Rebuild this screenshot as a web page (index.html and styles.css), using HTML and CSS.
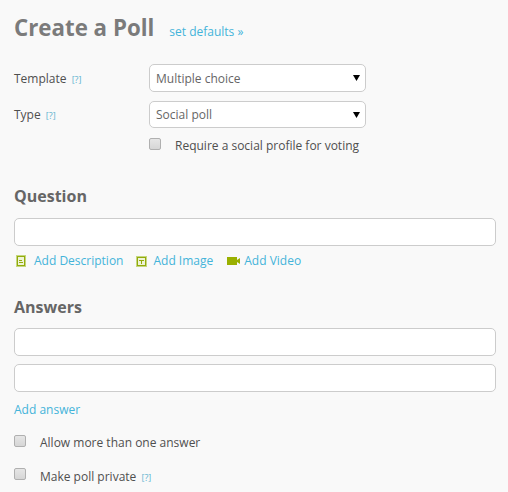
FILE: index.html
```html
<!DOCTYPE html>
<html lang="en">
<head>
    <meta charset="UTF-8">
    <title>Create a Poll</title>
    <link rel="stylesheet" href="styles.css">
</head>
<body>

<div class="title-row">
    <h1>Create a Poll</h1>
    <a class="link defaults" href="#">set defaults »</a>
</div>

<div class="form-row first">
    <div class="row-label">Template <a class="help" href="#">[?]</a></div>
    <select class="picker"><option>Multiple choice</option></select>
</div>
<div class="form-row second">
    <div class="row-label">Type <a class="help" href="#">[?]</a></div>
    <select class="picker short"><option>Social poll</option></select>
</div>
<div class="check-row social">
    <span class="check"></span>
    <span>Require a social profile for voting</span>
</div>

<h2 class="question-head">Question</h2>
<input class="text-box" type="text">
<div class="add-links">
    <a class="link add-item desc" href="#">
        <svg width="10" height="12" viewBox="0 0 10 12">
            <rect width="10" height="12" fill="#c5d77f"/>
            <rect x="1" y="1" width="8" height="10" fill="#eef3d6"/>
            <rect x="1.5" y="1.5" width="7" height="9" fill="none" stroke="#93ab0c"/>
            <rect x="3" y="5" width="3" height="1" fill="#93ab0c"/>
            <rect x="3" y="7" width="4" height="1" fill="#93ab0c"/>
        </svg>
        Add Description
    </a>
    <a class="link add-item image" href="#">
        <svg width="11" height="11" viewBox="0 0 11 11">
            <rect width="11" height="11" fill="#c5d77f"/>
            <rect x="1" y="1" width="9" height="9" fill="#eef3d6"/>
            <rect x="1.5" y="1.5" width="8" height="8" fill="none" stroke="#93ab0c"/>
            <rect x="3" y="4" width="5" height="1" fill="#93ab0c"/>
            <rect x="5" y="4" width="1" height="4" fill="#93ab0c"/>
        </svg>
        Add Image
    </a>
    <a class="link add-item video" href="#">
        <svg width="13" height="8" viewBox="0 0 13 8">
            <rect width="10" height="8" fill="#9ab000"/>
            <path d="M10 3 L13 1 V7 L10 5 Z" fill="#9ab000"/>
        </svg>
        Add Video
    </a>
</div>

<h2 class="answers-head">Answers</h2>
<input class="text-box" type="text">
<input class="text-box next" type="text">
<a class="link add-answer" href="#">Add answer</a>

<div class="check-row allow">
    <span class="check"></span>
    <span>Allow more than one answer</span>
</div>
<div class="check-row private">
    <span class="check"></span>
    <span class="private-text">Make poll private <a class="help" href="#">[?]</a></span>
</div>

</body>
</html>
```

FILE: styles.css
```css
html, body {
    height: 100%;
}
body {
    margin: 0;
    padding: 0 12px 0 14px;
    overflow: hidden;
    background-color: #f9f9f9;
    color: #4f4f4f;
    font-family: "Open Sans", sans-serif;
    font-size: 12px;
}
.link {
    color: #44b4d9;
    text-decoration: none;
}
.help {
    margin-left: 2px;
    color: #5fb3cf;
    font-size: 9px;
    text-decoration: none;
}
.title-row {
    display: flex;
    align-items: baseline;
    padding-top: 12px;
    height: 40px;
}
h1 {
    margin: 0;
    color: #7b7b7b;
    font-size: 22.3px;
    font-weight: 700;
    line-height: 32px;
}
.defaults {
    margin-left: 15px;
}
.form-row {
    display: flex;
    align-items: center;
    height: 28px;
}
.form-row.first {
    margin-top: 12px;
}
.form-row.second {
    height: 27px;
    margin-top: 9px;
}
.row-label {
    width: 135px;
}
.picker {
    appearance: none;
    width: 217px;
    height: 28px;
    padding: 0 6px;
    border: 1px solid #ccc;
    border-radius: 5px;
    background: #fff url("data:image/svg+xml,%3Csvg xmlns='http://www.w3.org/2000/svg' width='7' height='6'%3E%3Cpath d='M0 0H7L3.5 6Z' fill='%23000'/%3E%3C/svg%3E") no-repeat 203px 10px;
    color: #666;
    font-family: inherit;
    font-size: 12px;
}
.picker.short {
    height: 27px;
}
.check-row {
    display: flex;
    align-items: center;
    height: 14px;
}
.check {
    flex: none;
    box-sizing: border-box;
    width: 12px;
    height: 12px;
    margin-top: -2px;
    margin-right: 14px;
    border: 1px solid #b0b0b0;
    border-radius: 2px;
    background: linear-gradient(#e6e6e6, #d6d6d6);
}
.social {
    margin: 10px 0 0 135px;
}
.private-text {
    padding-top: 2px;
}
h2 {
    margin: 0;
    color: #666;
    font-size: 16px;
    font-weight: 700;
    line-height: 22px;
}
.question-head {
    margin-top: 33px;
}
.answers-head {
    margin-top: 26px;
}
.text-box {
    display: block;
    box-sizing: border-box;
    width: 482px;
    height: 28px;
    padding: 0 6px;
    border: 1px solid #ccc;
    border-radius: 5px;
    background-color: #fff;
}
.question-head + .text-box {
    margin-top: 11px;
}
.answers-head + .text-box {
    margin-top: 10px;
}
.text-box.next {
    margin-top: 8px;
}
.add-links {
    display: flex;
    margin-top: 6px;
    height: 18px;
}
.add-item {
    display: flex;
    align-items: center;
    line-height: 18px;
}
.desc {
    margin-left: 2px;
    gap: 8px;
}
.image {
    margin-left: 13px;
    gap: 6px;
}
.video {
    margin-left: 14px;
    gap: 4px;
}
.add-answer {
    display: block;
    margin-top: 9px;
    line-height: 18px;
}
.allow {
    margin-top: 16px;
}
.private {
    margin-top: 19px;
}
```
